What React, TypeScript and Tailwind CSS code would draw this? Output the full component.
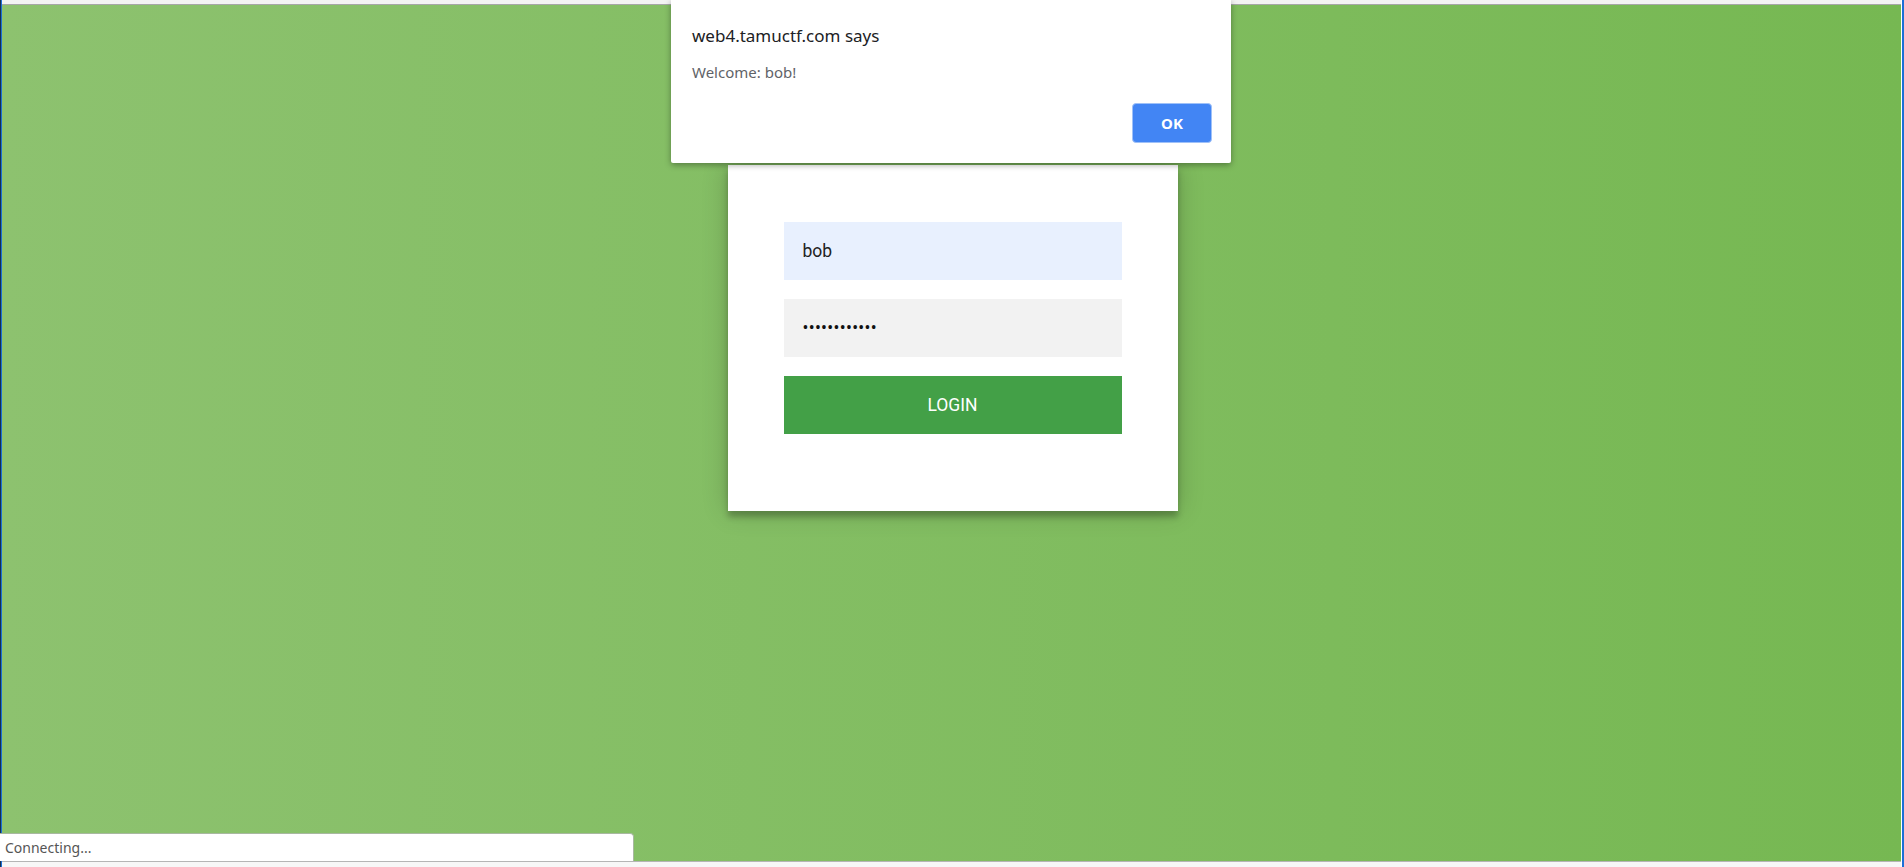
import React from "react";

export default function App() {
  return (
    <div className="relative h-[867px] w-[1904px] overflow-hidden bg-white">
      <div className="flex h-full w-full">
        {/* left window edge */}
        <div className="w-px bg-[#14304f]" />
        <div className="w-px bg-[#1c6fd6]" />
        {/* main column */}
        <div className="flex flex-1 flex-col">
          <div className="h-[4px] bg-[#f3f3f3]" />
          <div className="h-px bg-[#a7a7a7]" />
          <div className="flex flex-1 justify-center bg-linear-to-l from-[#76b852] to-[#8DC26F] pt-[160px] pl-[2px]">
            <div className="flex h-[346px] w-[450px] flex-col bg-white px-[56px] pt-[57px] pb-[76px] shadow-[0_0_25px_0_rgba(0,0,0,0.2),0_6px_6px_0_rgba(0,0,0,0.24)]">
              <div className="flex h-[58px] items-center bg-[#e8f0fe] px-[19px] font-['Roboto',sans-serif] text-[17.5px] text-[#222]">
                bob
              </div>
              <div className="mt-[19px] flex h-[58px] items-center bg-[#f2f2f2] px-[19px] font-['Roboto',sans-serif] text-[17.5px] tracking-[0.3px] text-[#111]">
                ••••••••••••
              </div>
              <div className="mt-[19px] flex h-[58px] items-center justify-center bg-[#43a047] pt-px font-['Roboto',sans-serif] text-[17.5px] text-white">
                LOGIN
              </div>
            </div>
          </div>
          <div className="h-px bg-[#b5b5b5]" />
          <div className="h-[5px] bg-[#f7f7f7]" />
        </div>
        {/* right window edge */}
        <div className="w-px bg-white" />
        <div className="w-[2px] bg-[#1c6fd6]" />
      </div>

      {/* alert dialog */}
      <div className="absolute left-[671px] top-0 flex h-[163px] w-[560px] flex-col rounded-b-[2px] bg-white shadow-[0_2px_6px_rgba(0,0,0,0.35)]">
        <div className="pl-[21px] pt-[24px] font-['Noto_Sans',sans-serif] text-[17px] leading-[24px] text-[#202124]">
          web4.tamuctf.com says
        </div>
        <div className="pl-[21px] pt-[14px] font-['Noto_Sans',sans-serif] text-[15px] leading-[20px] text-[#5f6368]">
          Welcome: bob!
        </div>
        <div className="flex flex-1 items-end justify-end pb-[20px] pr-[19px]">
          <div className="flex h-[40px] w-[80px] items-center justify-center rounded-[4px] border border-[#9fc1f8] bg-[#4285f4] font-['Noto_Sans',sans-serif] text-[15px] font-bold text-white">
            OK
          </div>
        </div>
      </div>

      {/* status bubble */}
      <div className="absolute bottom-[6px] left-0 flex h-[28px] w-[634px] items-center rounded-tr-[4px] border-t border-r border-[#a8b8a0] bg-white pl-[5px] font-['Noto_Sans',sans-serif] text-[14px] text-[#555]">
        Connecting...
      </div>
    </div>
  );
}
